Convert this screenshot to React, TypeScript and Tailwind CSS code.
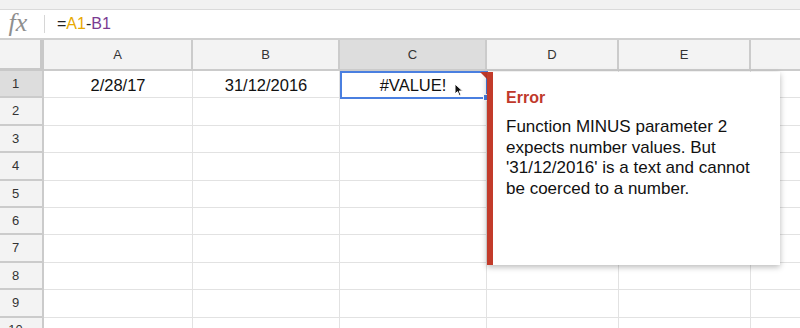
import React from "react";

const cols = [
  { l: "A", w: 149 },
  { l: "B", w: 147 },
  { l: "C", w: 147 },
  { l: "D", w: 132 },
  { l: "E", w: 132 },
  { l: "", w: 60 },
];

const row1 = ["2/28/17", "31/12/2016", "#VALUE!", "", "", ""];

export default function App() {
  return (
    <div
      className="relative w-[800px] h-[328px] overflow-hidden bg-white"
      style={{ fontFamily: '"Liberation Sans", Arial, sans-serif' }}
    >
      {/* top toolbar remnant */}
      <div className="h-[10px] bg-[#f1f1f1] border-b border-[#dadada]" />
      {/* formula bar */}
      <div className="h-[30px] flex items-center border-b-2 border-[#d0d0d0]">
        <div
          className="w-[44px] pr-[8px] pb-[2px] text-center text-[26px] italic text-[#8f8f8f] leading-none"
          style={{ fontFamily: '"Liberation Serif", "Times New Roman", serif' }}
        >
          fx
        </div>
        <div className="w-px h-[18px] bg-[#d6d6d6]" />
        <div className="pl-[12px] text-[16px] text-[#222]">
          =<span className="text-[#e8a900]">A1</span>-<span className="text-[#7b3b92]">B1</span>
        </div>
      </div>
      {/* header row */}
      <div className="flex h-[31px]">
        <div className="w-[44px] shrink-0 bg-[#f3f3f3] border-r-4 border-b-[3px] border-[#c8c8c8]" />
        {cols.map((c, i) => (
          <div
            key={i}
            className={`shrink-0 flex items-center justify-center text-[13px] text-[#333] border-r-2 border-b-2 border-[#cbcbcb] ${
              i === 2 ? "bg-[#dddddd]" : "bg-[#f3f3f3]"
            }`}
            style={{ width: c.w }}
          >
            {c.l}
          </div>
        ))}
      </div>
      {/* rows */}
      {Array.from({ length: 10 }).map((_, r) => (
        <div key={r} className="flex h-[27.4px]">
          <div
            className={`w-[44px] shrink-0 flex items-center border-r-2 border-b-2 border-[#cbcbcb] text-[13px] text-[#333] ${
              r === 0 ? "bg-[#dddddd]" : "bg-[#f3f3f3]"
            }`}
          >
            <span className="w-[31px] text-center">{r + 1}</span>
          </div>
          {cols.map((c, i) => (
            <div
              key={i}
              className="shrink-0 flex items-center justify-center pt-[3px] text-[16.5px] text-[#111] border-r border-b border-[#e2e2e2]"
              style={{ width: c.w }}
            >
              {r === 0 ? row1[i] : ""}
            </div>
          ))}
        </div>
      ))}

      {/* selection on C1 */}
      <div className="absolute left-[340px] top-[71px] w-[148px] h-[28px] border-2 border-[#4a7fe0]" />
      <div className="absolute left-[483px] top-[94px] w-[7px] h-[7px] bg-[#4a7fe0] border border-white" />
      {/* error triangle */}
      <div className="absolute left-[480px] top-[72px] w-0 h-0 border-t-[7px] border-l-[7px] border-t-[#c0392b] border-l-transparent" />

      {/* mouse cursor */}
      <svg className="absolute left-[454px] top-[83px]" width="10" height="14" viewBox="0 0 10 14">
        <path d="M1 1 L1 11 L3.5 8.6 L5.3 12.6 L6.9 11.9 L5.2 8 L8.6 8 Z" fill="#111" stroke="#fff" strokeWidth="1" />
      </svg>

      {/* error tooltip */}
      <div className="absolute left-[487px] top-[72px] w-[293px] h-[193px] bg-white flex shadow-[0_2px_6px_rgba(0,0,0,0.28)]">
        <div className="w-[6px] bg-[#c23b2a]" />
        <div className="pl-[13px] pt-[17px] w-[270px]">
          <div className="text-[16px] font-bold text-[#c0392b] leading-[18px]">Error</div>
          <div className="mt-[10px] w-[256px] text-[17px] leading-[20.5px] text-[#111]">
            Function MINUS parameter 2 expects number values. But '31/12/2016' is a text and cannot be coerced to a number.
          </div>
        </div>
      </div>
    </div>
  );
}
